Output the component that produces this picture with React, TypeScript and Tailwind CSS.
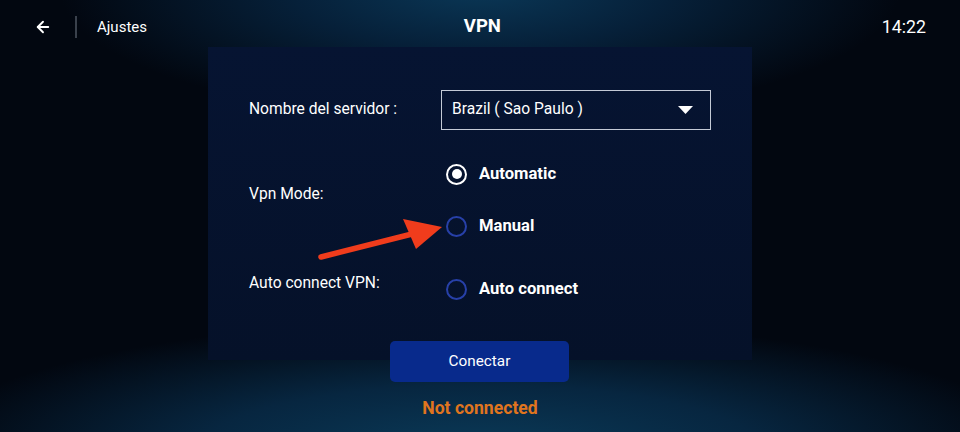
import { ArrowLeft } from "lucide-react";

function Radio({ label, checked }: { label: string; checked?: boolean }) {
  return (
    <div className="flex h-[40px] items-center gap-[12px]">
      <span
        className={
          checked
            ? "flex h-[21px] w-[21px] items-center justify-center rounded-full border-2 border-white"
            : "flex h-[21px] w-[21px] items-center justify-center rounded-full border-2 border-[#2740a8]"
        }
      >
        {checked && <span className="h-[10px] w-[10px] rounded-full bg-white" />}
      </span>
      <span className="text-[16.6px] font-bold text-white">{label}</span>
    </div>
  );
}

export default function App() {
  return (
    <div
      className="relative h-[432px] w-[960px] overflow-hidden bg-[#020710] bg-[radial-gradient(ellipse_420px_130px_at_480px_-10px,#0a3756_0%,#062039_45%,transparent_100%),radial-gradient(ellipse_560px_130px_at_480px_450px,#0a3a58_0%,#072640_50%,transparent_100%)] text-white"
      style={{ fontFamily: "Roboto, 'Noto Sans', sans-serif" }}
    >
      {/* header */}
      <div className="flex h-[47px] items-center px-[34px] pt-[7px]">
        <ArrowLeft className="h-[18px] w-[18px]" strokeWidth={2.5} />
        <div className="ml-[23px] h-[22px] w-[2px] bg-[#3a414c]" />
        <span className="ml-[20px] text-[15px]">Ajustes</span>
        <span className="-ml-[64px] flex-1 text-center text-[18.5px] font-bold">VPN</span>
        <span className="text-[17.8px]">14:22</span>
      </div>

      {/* panel */}
      <div className="mx-auto h-[313px] w-[544px] bg-[linear-gradient(180deg,#061432_0%,#051129_100%)] pl-[41px]">
        <div className="pt-[43px]">
          <div className="flex items-center">
            <span className="w-[192px] text-[15.6px]">Nombre del servidor :</span>
            <div className="flex h-[40px] w-[270px] items-center justify-between border border-[#c4cad6] pl-[10px] pr-[17px]">
              <span className="text-[15.6px]">Brazil ( Sao Paulo )</span>
              <svg width="15" height="8" viewBox="0 0 15 8">
                <path d="M0 0 L15 0 L7.5 8 Z" fill="white" />
              </svg>
            </div>
          </div>

          <div className="mt-[24px] flex items-center">
            <span className="-mt-[10px] w-[192px] text-[15.6px]">Vpn Mode:</span>
            <div className="ml-[5px] flex flex-col gap-[12px]">
              <Radio label="Automatic" checked />
              <Radio label="Manual" />
            </div>
          </div>

          <div className="mt-[23px] flex items-center">
            <span className="-mt-[10px] w-[192px] text-[15.6px]">Auto connect VPN:</span>
            <div className="ml-[5px]">
              <Radio label="Auto connect" />
            </div>
          </div>

          <div className="mt-[32px] flex">
            <button className="ml-[141px] h-[41px] w-[179px] rounded-[5px] bg-[#082a8c] text-[15.3px] text-white">
              Conectar
            </button>
          </div>
        </div>
      </div>

      <div className="mt-[35px] text-center text-[17.6px] font-bold text-[#e0751e]">Not connected</div>

      {/* red annotation arrow */}
      <svg className="absolute left-0 top-0" width="960" height="432" viewBox="0 0 960 432">
        <line x1="321" y1="257" x2="412" y2="234" stroke="#f03c1c" strokeWidth="5.5" strokeLinecap="round" />
        <polygon points="442,227 403,219 416,249" fill="#f03c1c" />
      </svg>
    </div>
  );
}
